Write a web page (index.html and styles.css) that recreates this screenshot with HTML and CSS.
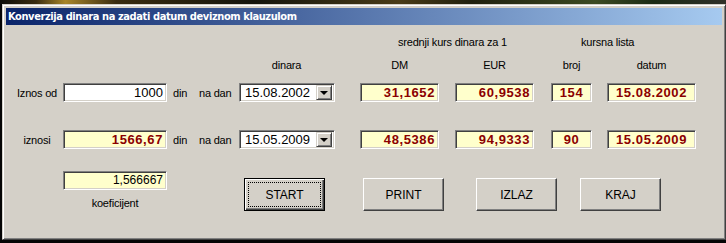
FILE: index.html
```html
<!DOCTYPE html>
<html lang="sr">

<head>
    <meta charset="UTF-8">
    <title>Konverzija dinara</title>
    <link rel="stylesheet" href="styles.css">
</head>

<body>
    <div class="desktop-strip"></div>

    <div class="window">
        <div class="titlebar">Konverzija dinara na zadati datum deviznom klauzulom</div>

        <div class="content">
            <!-- column headers -->
            <div class="row head-1">
                <span class="group-label kurs">srednji kurs dinara za 1</span>
                <span class="group-label lista">kursna lista</span>
            </div>
            <div class="row head-2">
                <span class="col-date center">dinara</span>
                <span class="col-dm center">DM</span>
                <span class="col-eur center">EUR</span>
                <span class="col-broj center">broj</span>
                <span class="col-datum center">datum</span>
            </div>

            <!-- Iznos od -->
            <div class="row fields">
                <span class="col-label label first">Iznos od</span>
                <div class="col-amount field white">1000</div>
                <span class="col-din unit">din</span>
                <span class="col-nadan unit">na dan</span>
                <div class="col-date field white combo">
                    <span>15.08.2002</span>
                    <span class="combo-btn"><span class="arrow"></span></span>
                </div>
                <div class="col-dm field value">31,1652</div>
                <div class="col-eur field value">60,9538</div>
                <div class="col-broj field value centered">154</div>
                <div class="col-datum field value centered">15.08.2002</div>
            </div>

            <!-- iznosi -->
            <div class="row fields second">
                <span class="col-label label">iznosi</span>
                <div class="col-amount field value">1566,67</div>
                <span class="col-din unit">din</span>
                <span class="col-nadan unit">na dan</span>
                <div class="col-date field white combo">
                    <span>15.05.2009</span>
                    <span class="combo-btn"><span class="arrow"></span></span>
                </div>
                <div class="col-dm field value">48,5386</div>
                <div class="col-eur field value">94,9333</div>
                <div class="col-broj field value centered">90</div>
                <div class="col-datum field value centered">15.05.2009</div>
            </div>

            <!-- koeficijent + buttons -->
            <div class="bottom">
                <div class="coef">
                    <div class="field yellow">1,566667</div>
                    <div class="coef-label">koeficijent</div>
                </div>
                <div class="buttons">
                    <button class="btn default start"><span class="focus">START</span></button>
                    <button class="btn print">PRINT</button>
                    <button class="btn izlaz">IZLAZ</button>
                    <button class="btn kraj">KRAJ</button>
                </div>
            </div>
        </div>
    </div>
</body>

</html>
```

FILE: styles.css
```css
/* Win2000 style dialog */
:root {
    --face: #d4d0c8;
    --shadow: #808080;
    --dark: #404040;
    --light: #ffffff;
    --yellow: #ffffcc;
    --red: #8b0000;
}

body {
    margin: 0;
    width: 726px;
    height: 243px;
    background-color: #050505;
    overflow: hidden;
    font-family: 'Liberation Sans', Arial, sans-serif;
    font-size: 11px;
    color: #000;
}

.desktop-strip {
    height: 4px;
    background: linear-gradient(90deg, #0c0c08 0%, #3a2c10 5%, #a8862a 9%, #3a2c10 16%, #14140c 35%, #4a3c18 55%, #20200e 65%, #3c4a22 82%, #1a2a14 90%, #303028 100%);
}

.window {
    box-sizing: border-box;
    width: 724px;
    height: 236px;
    margin-left: 2px;
    padding: 3px;
    background-color: var(--face);
    border: 1px solid;
    border-color: var(--face) var(--dark) var(--dark) var(--face);
    box-shadow: inset 1px 1px var(--light), inset -1px -1px var(--shadow);
}

.titlebar {
    height: 17px;
    padding-left: 2px;
    line-height: 17px;
    background: linear-gradient(90deg, #0a246a, #a6caf0);
    color: #fff;
    font-family: 'DejaVu Sans Condensed', 'DejaVu Sans', sans-serif;
    font-size: 11px;
    font-weight: bold;
    letter-spacing: -0.4px;
    white-space: nowrap;
}

.content {
    padding-top: 10px;
}

/* shared column grid */
.row {
    display: grid;
    grid-template-columns: 57px 104px 27px 44px 97px 25px 79px 16px 79px 17px 41px 15px 89px;
    align-items: center;
    line-height: 14px;
    letter-spacing: -0.2px;
}

.head-1 {
    height: 14px;
}

.head-2 {
    height: 14px;
    margin-top: 9px;
}

.fields {
    height: 19px;
    margin-top: 11px;
}

.fields.second {
    margin-top: 28px;
}

.col-label { grid-column: 1; }
.col-amount { grid-column: 2; }
.col-din { grid-column: 3; }
.col-nadan { grid-column: 4; }
.col-date { grid-column: 5; }
.col-dm { grid-column: 7; }
.col-eur { grid-column: 9; }
.col-broj { grid-column: 11; }
.col-datum { grid-column: 13; }

.group-label.kurs {
    grid-column: 7 / 10;
    padding-left: 38px;
}

.group-label.lista {
    grid-column: 11 / 14;
    padding-left: 30px;
}

.center {
    text-align: center;
}

.label {
    padding-left: 5px;
    text-align: center;
}

.unit {
    padding-left: 6px;
}

.col-nadan.unit {
    padding-left: 5px;
}

/* sunken edit boxes */
.field {
    box-sizing: border-box;
    height: 19px;
    padding: 0 3px;
    border: 1px solid;
    border-color: var(--shadow) var(--light) var(--light) var(--shadow);
    box-shadow: inset 1px 1px var(--dark), inset -1px -1px var(--face);
    line-height: 17px;
    text-align: right;
    font-size: 12px;
    letter-spacing: 0;
    white-space: nowrap;
}

.field.white {
    background-color: var(--light);
    font-size: 13px;
}

.field.yellow {
    background-color: var(--yellow);
    font-size: 12px;
}

.field.value {
    background-color: var(--yellow);
    color: var(--red);
    font-size: 13px;
    font-weight: bold;
    letter-spacing: 0.6px;
}

.field.centered {
    text-align: center;
}

.col-date.field {
    margin-left: 1px;
}

.combo {
    display: flex;
    align-items: center;
    justify-content: space-between;
    padding: 0 2px 0 5px;
    text-align: left;
    font-size: 12px;
}

.combo-btn {
    box-sizing: border-box;
    display: flex;
    align-items: center;
    justify-content: center;
    width: 16px;
    height: 15px;
    background-color: var(--face);
    border: 1px solid;
    border-color: var(--face) var(--dark) var(--dark) var(--face);
    box-shadow: inset 1px 1px var(--light), inset -1px -1px var(--shadow);
}

.arrow {
    width: 0;
    height: 0;
    border-left: 4px solid transparent;
    border-right: 4px solid transparent;
    border-top: 4px solid #000;
}

/* bottom part */
.bottom {
    display: flex;
    align-items: flex-start;
    margin-top: 22px;
    padding-left: 57px;
}

.coef {
    width: 104px;
}

.coef-label {
    margin-top: 6px;
    line-height: 14px;
    text-align: center;
    letter-spacing: -0.2px;
}

.buttons {
    display: flex;
    margin-top: 7px;
}

.btn {
    box-sizing: border-box;
    width: 81px;
    height: 33px;
    padding: 0;
    background-color: var(--face);
    border: 1px solid;
    border-color: var(--light) var(--dark) var(--dark) var(--light);
    box-shadow: inset -1px -1px var(--shadow);
    font-family: 'Liberation Sans', Arial, sans-serif;
    font-size: 12px;
    color: #000;
}

.btn.default {
    border: 1px solid #000;
    box-shadow: inset 1px 1px var(--light), inset -1px -1px var(--dark), inset -2px -2px var(--shadow);
    padding: 3px;
}

.focus {
    box-sizing: border-box;
    display: flex;
    align-items: center;
    justify-content: center;
    width: 100%;
    height: 100%;
    border: 1px dotted #000;
}

.start { margin-left: 77px; }
.print { margin-left: 38px; }
.izlaz { margin-left: 32px; }
.kraj { margin-left: 23px; }
```
